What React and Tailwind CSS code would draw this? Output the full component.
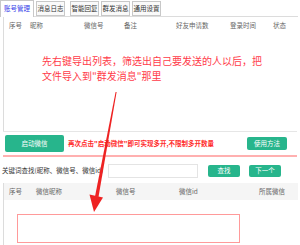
import React from "react";

const font = { fontFamily: '"Noto Sans CJK SC", "Noto Sans", sans-serif' };

function Tab({ label, active }) {
  return active ? (
    <div className="h-[17px] w-[34px] border border-b-0 border-[#c8c8c8] bg-white flex items-center justify-center text-[6.5px] text-[#3340e8] relative z-10">
      {label}
    </div>
  ) : (
    <div className="h-[15px] w-[29px] border border-[#c8c8c8] bg-[#fafafa] flex items-center justify-center text-[6.5px] text-[#333] mt-[1px]">
      {label}
    </div>
  );
}

export default function App() {
  return (
    <div className="w-[300px] h-[245px] bg-white relative overflow-hidden text-[#555]" style={font}>
      {/* tabs */}
      <div className="flex items-start gap-[2px] h-[17px]">
        <Tab label="账号管理" active />
        <Tab label="消息日志" />
        <div className="w-[1px]" />
        <Tab label="智能回复" />
        <Tab label="群发消息" />
        <Tab label="通用设置" />
      </div>

      {/* upper table */}
      <div className="ml-[3px] mr-[2px] h-[115px] border-t border-l border-[#dcdcdc] -mt-[1px]">
        <div className="flex items-center h-[15px] text-[6.5px] text-[#666] mt-[1px]">
          <span className="ml-[5px] w-[21px]">序号</span>
          <span className="w-[54px]">昵称</span>
          <span className="w-[40px]">微信号</span>
          <span className="w-[52px]">备注</span>
          <span className="w-[54px]">好友申请数</span>
          <span className="w-[43px]">登录时间</span>
          <span>状态</span>
        </div>
      </div>

      {/* button box */}
      <div className="mx-[3px] h-[26px] border-t border-[#e6e6e6] border-b-2 border-b-[#ffb0b0] flex items-center pl-[2px] pr-[10px]">
        <div className="w-[59px] h-[17px] rounded-[2px] bg-[#27b58c] text-white text-[6.5px] flex items-center justify-center">
          启动微信
        </div>
        <span className="ml-[4px] text-[6.5px] font-bold text-[#ff2a2a] whitespace-nowrap">
          再次点击"启动微信"即可实现多开,不限制多开数量
        </span>
        <div className="ml-auto w-[40px] h-[13px] rounded-[2px] bg-[#27b58c] text-white text-[6.5px] flex items-center justify-center">
          使用方法
        </div>
      </div>

      {/* search row */}
      <div className="flex items-center h-[14px] mt-[7px] pl-[2px]">
        <span className="text-[6.5px] text-[#333] whitespace-nowrap w-[106px]">关键词查找(昵称、微信号、微信id)</span>
        <div className="w-[90px] h-[14px] border border-[#e4e4e4] bg-white" />
        <div className="ml-[10px] w-[32px] h-[12px] rounded-[2px] bg-[#27b58c] text-white text-[6.5px] flex items-center justify-center">
          查找
        </div>
        <div className="ml-[9px] w-[32px] h-[12px] rounded-[2px] bg-[#27b58c] text-white text-[6.5px] flex items-center justify-center">
          下一个
        </div>
      </div>

      {/* lower table */}
      <div className="ml-[3px] mr-[2px] mt-[5px] h-[70px] border-l border-[#dcdcdc]">
        <div className="flex items-center h-[17px] bg-[#f5f5f5] text-[6.5px] text-[#666]">
          <span className="ml-[5px] w-[27px]">序号</span>
          <span className="w-[80px]">微信昵称</span>
          <span className="w-[63px]">微信号</span>
          <span className="w-[80px]">微信id</span>
          <span>所属微信</span>
        </div>
      </div>

      {/* annotation overlay */}
      <div className="absolute left-[42px] top-[53px] text-[10px] leading-[15px] text-[#ff3b4a] whitespace-nowrap">
        <div>先右键导出列表，筛选出自己要发送的人以后，把</div>
        <div>文件导入到"群发消息"那里</div>
      </div>

      <div className="absolute left-[17px] top-[214px] w-[223px] h-[29px] border border-[#ff9a9a]" />

      <svg className="absolute left-0 top-0" width="300" height="245" viewBox="0 0 300 245">
        <polygon points="115.6,92 116.6,92 98.5,197 95,196.5" fill="#ee2222" />
        <polygon points="89.5,194.5 103,197.5 94,212" fill="#ee2222" />
      </svg>
    </div>
  );
}
